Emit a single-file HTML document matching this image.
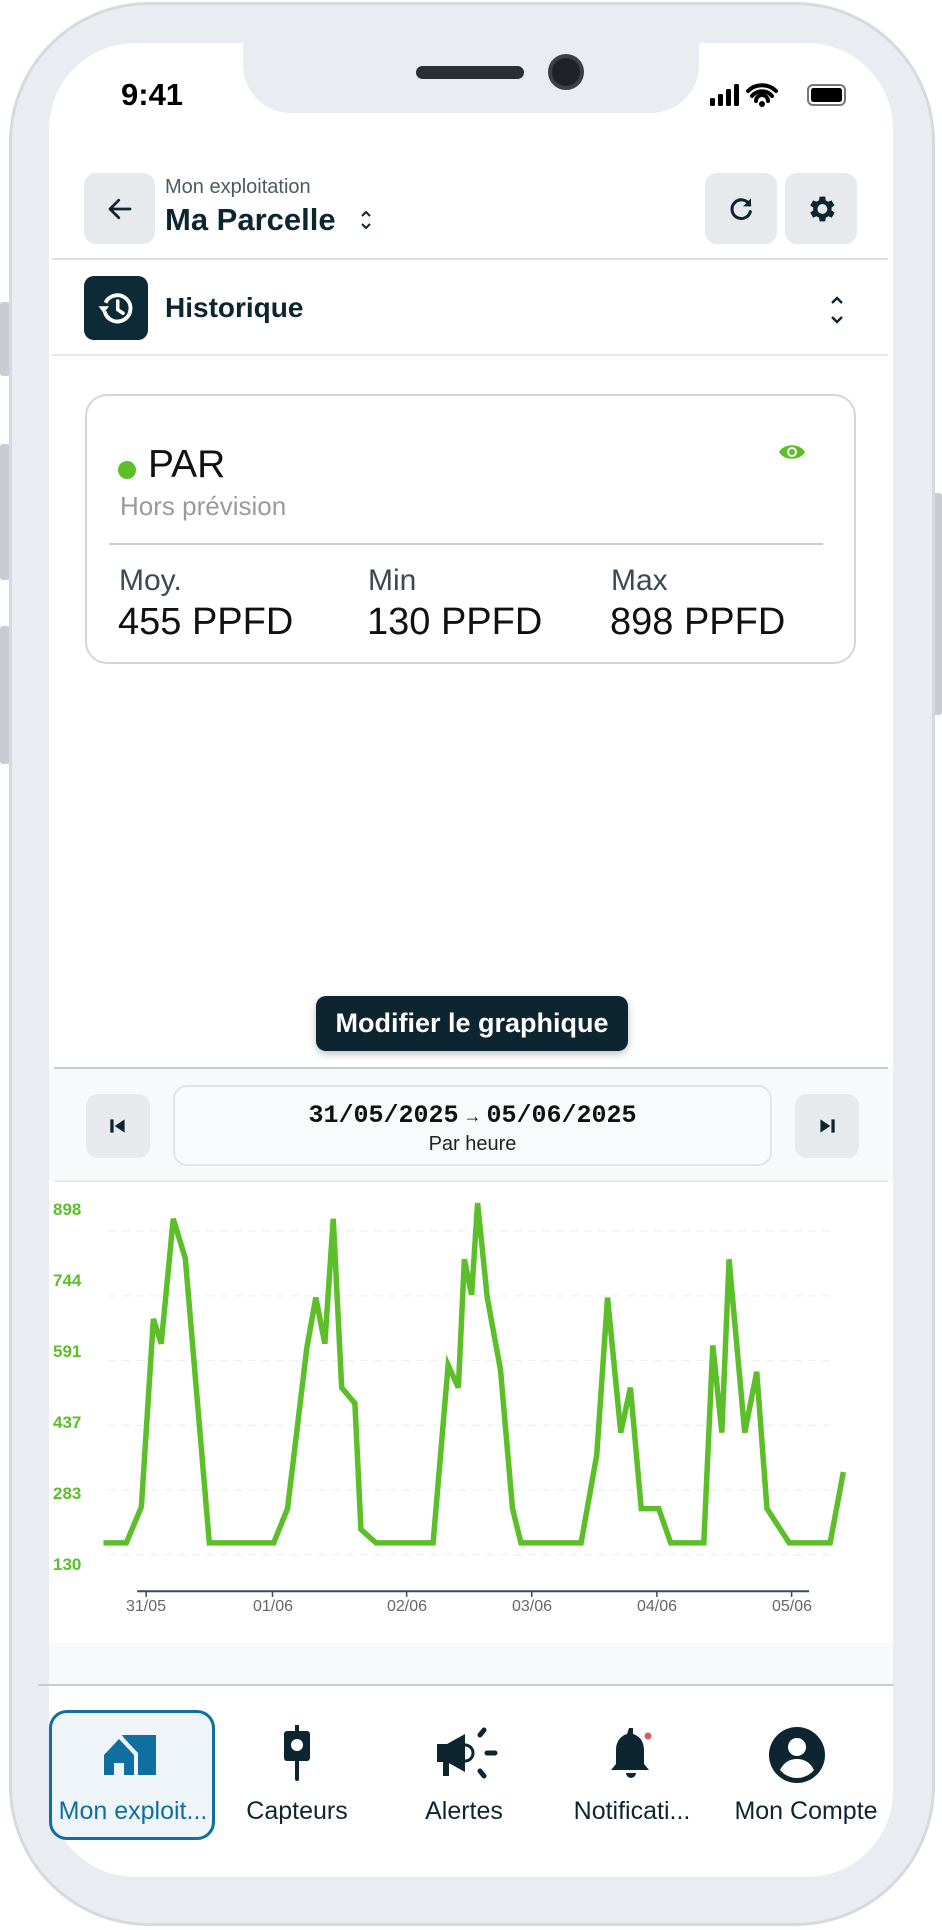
<!DOCTYPE html>
<html><head><meta charset="utf-8"><style>
*{margin:0;padding:0;box-sizing:border-box}
body{width:942px;height:1930px;background:#fff;position:relative;overflow:hidden;font-family:"Liberation Sans",sans-serif;color:#0d2531}
.a{position:absolute}
.btn{position:absolute;background:#e6eaec;border-radius:12px;display:flex;align-items:center;justify-content:center}
.lab{position:absolute;font-size:17px;font-weight:bold;color:#5cbf2a;left:53px}
.tick{position:absolute;font-size:16px;color:#666;top:1598px;transform:translateX(-50%)}
.nl{position:absolute;top:1797px;font-size:25px;color:#0d2531;transform:translateX(-50%);white-space:nowrap}
</style></head><body>
<div class="a" style="left:0;top:302px;width:10px;height:74px;background:#c9ccd1;border-radius:3px"></div>
<div class="a" style="left:0;top:444px;width:10px;height:136px;background:#c9ccd1;border-radius:3px"></div>
<div class="a" style="left:0;top:626px;width:10px;height:138px;background:#c9ccd1;border-radius:3px"></div>
<div class="a" style="left:932px;top:493px;width:10px;height:222px;background:#c9ccd1;border-radius:3px"></div>
<div class="a" style="left:9px;top:2px;width:926px;height:1924px;background:#e9ecf0;border:3px solid #d6d9de;border-radius:140px"></div>
<div class="a" style="left:49px;top:43px;width:844px;height:1834px;background:#fff;border-radius:86px;overflow:hidden">
  <div class="a" style="left:0;top:1025px;width:844px;height:618px;background:#f7f9fa"></div>
  <div class="a" style="left:0;top:1138px;width:844px;height:462px;background:#fff"></div>
</div>
<div class="a" style="left:243px;top:30px;width:456px;height:83px;background:#e9ecf0;border-radius:0 0 48px 48px"></div>
<div class="a" style="left:416px;top:66px;width:108px;height:13px;background:#2a2f33;border-radius:7px"></div>
<div class="a" style="left:548px;top:54px;width:36px;height:36px;background:#1e2226;border-radius:50%;border:4px solid #3a4046"></div>
<div class="a" style="left:121px;top:77px;font-size:31px;font-weight:bold;color:#000">9:41</div>
<svg class="a" style="left:708px;top:82px" width="140" height="26" viewBox="0 0 140 26">
<rect x="2" y="16" width="5" height="8" rx="1.5" fill="#000"/><rect x="10" y="12" width="5" height="12" rx="1.5" fill="#000"/><rect x="18" y="7" width="5" height="17" rx="1.5" fill="#000"/><rect x="26" y="2" width="5" height="22" rx="1.5" fill="#000"/>
<path d="M40 9a20 20 0 0 1 28 0M44 14a13 13 0 0 1 20 0M48 19a6 6 0 0 1 12 0" stroke="#000" stroke-width="4" fill="none" stroke-linecap="round"/><circle cx="54" cy="22" r="3" fill="#000"/>
<rect x="100" y="3" width="37" height="20" rx="5" fill="none" stroke="#777" stroke-width="2"/><rect x="103" y="6" width="31" height="14" rx="2.5" fill="#000"/>
</svg>
<div class="btn" style="left:84px;top:173px;width:71px;height:71px"><svg width="30" height="30" viewBox="0 0 24 24"><path d="M20 12H5M11 5l-7 7 7 7" stroke="#0d2531" stroke-width="2.2" fill="none" stroke-linecap="round" stroke-linejoin="round"/></svg></div>
<div class="a" style="left:165px;top:176px;font-size:20px;color:#4a5a62">Mon exploitation</div>
<div class="a" style="left:165px;top:202px;font-size:31px;font-weight:bold">Ma Parcelle</div>
<svg class="a" style="left:359px;top:208px" width="14" height="24" viewBox="0 0 14 24"><path d="M3 8l4-4 4 4M3 16l4 4 4-4" stroke="#0d2531" stroke-width="2" fill="none"/></svg>
<div class="btn" style="left:705px;top:173px;width:72px;height:71px"><svg width="32" height="32" viewBox="0 0 24 24"><path d="M18.5 9A7 7 0 1 0 19 14" stroke="#0d2531" stroke-width="2.3" fill="none" stroke-linecap="round"/><path d="M19.5 4v6h-6z" fill="#0d2531"/></svg></div>
<div class="btn" style="left:785px;top:173px;width:72px;height:71px"><svg width="34" height="34" viewBox="0 0 24 24"><path fill="#0d2531" d="M19.4 13a7.5 7.5 0 0 0 0-2l2.1-1.6-2-3.5-2.5 1a7.3 7.3 0 0 0-1.7-1L15 3.3h-4l-.4 2.6a7.3 7.3 0 0 0-1.7 1l-2.5-1-2 3.5L6.5 11a7.5 7.5 0 0 0 0 2l-2.1 1.6 2 3.5 2.5-1c.5.4 1.1.7 1.7 1l.4 2.6h4l.4-2.6c.6-.3 1.2-.6 1.7-1l2.5 1 2-3.5zM13 15.5a3.5 3.5 0 1 1 0-7 3.5 3.5 0 0 1 0 7z"/></svg></div>
<div class="a" style="left:52px;top:258px;width:836px;height:2px;background:#dde1e4"></div>
<div class="a" style="left:84px;top:276px;width:64px;height:64px;background:#0d2b36;border-radius:10px;display:flex;align-items:center;justify-content:center"><svg width="42" height="42" viewBox="0 0 24 24"><path d="M6 9a7.5 7.5 0 1 1-.5 5" stroke="#fff" stroke-width="2.2" fill="none"/><path d="M2 11h6l-3 4z" fill="#fff"/><path d="M13 8v5l3 2" stroke="#fff" stroke-width="2" fill="none" stroke-linecap="round"/></svg></div>
<div class="a" style="left:165px;top:292px;font-size:28px;font-weight:bold">Historique</div>
<svg class="a" style="left:826px;top:293px" width="22" height="34" viewBox="0 0 22 34"><path d="M6 10l5-5 5 5M6 24l5 5 5-5" stroke="#0d2531" stroke-width="2.4" fill="none"/></svg>
<div class="a" style="left:52px;top:354px;width:836px;height:2px;background:#e6e9eb"></div>
<div class="a" style="left:85px;top:394px;width:771px;height:270px;border:2px solid #d4d6d8;border-radius:22px"></div>
<div class="a" style="left:118px;top:461px;width:18px;height:18px;border-radius:50%;background:#5cbf2a"></div>
<div class="a" style="left:148px;top:443px;font-size:39px;color:#111">PAR</div>
<div class="a" style="left:120px;top:491px;font-size:26px;color:#9a9a9a">Hors prévision</div>
<svg class="a" style="left:777px;top:441px" width="30" height="22" viewBox="0 0 30 22"><path d="M2 11C7 2 23 2 28 11C23 20 7 20 2 11z" fill="#5cbf2a"/><circle cx="15" cy="11" r="5" fill="#fff"/><circle cx="15" cy="11" r="3" fill="#5cbf2a"/></svg>
<div class="a" style="left:109px;top:543px;width:714px;height:2px;background:#ccc"></div>
<div class="a" style="left:119px;top:564px;font-size:30px;color:#3a4a52">Moy.</div>
<div class="a" style="left:368px;top:564px;font-size:30px;color:#3a4a52">Min</div>
<div class="a" style="left:611px;top:564px;font-size:30px;color:#3a4a52">Max</div>
<div class="a" style="left:118px;top:601px;font-size:38px;color:#111">455 PPFD</div>
<div class="a" style="left:367px;top:601px;font-size:38px;color:#111">130 PPFD</div>
<div class="a" style="left:610px;top:601px;font-size:38px;color:#111">898 PPFD</div>
<div class="a" style="left:316px;top:996px;width:312px;height:55px;background:#0d2531;border-radius:10px;color:#fff;font-size:27px;font-weight:bold;display:flex;align-items:center;justify-content:center;box-shadow:0 3px 8px rgba(0,0,0,.25)">Modifier le graphique</div>
<div class="a" style="left:54px;top:1067px;width:834px;height:2px;background:#c8cdd0"></div>
<div class="btn" style="left:86px;top:1094px;width:64px;height:64px"><svg width="22" height="22" viewBox="0 0 20 20"><rect x="3" y="4" width="3" height="12" fill="#0d2531"/><path d="M16 4v12l-9-6z" fill="#0d2531"/></svg></div>
<div class="a" style="left:173px;top:1085px;width:599px;height:81px;border:2px solid #e2e5e7;border-radius:14px;background:#f9fafb"></div>
<div class="a" style="left:173px;top:1101px;width:599px;text-align:center;font-family:'Liberation Mono',monospace;font-size:25px;font-weight:bold;color:#111">31/05/2025<span style="font-size:18px;font-family:'Liberation Sans',sans-serif"> → </span>05/06/2025</div>
<div class="a" style="left:173px;top:1133px;width:599px;text-align:center;font-size:20px;color:#222">Par heure</div>
<div class="btn" style="left:795px;top:1094px;width:64px;height:64px"><svg width="22" height="22" viewBox="0 0 20 20"><rect x="14" y="4" width="3" height="12" fill="#0d2531"/><path d="M4 4v12l9-6z" fill="#0d2531"/></svg></div>
<div class="a" style="left:54px;top:1180px;width:834px;height:2px;background:#e8ebed"></div>
<svg class="a" style="left:0;top:1050px" width="942" height="880" viewBox="0 0 1566 1564" preserveAspectRatio="none">
<g stroke="#eeeeee" stroke-width="1" stroke-dasharray="8 6">
<line x1="180" x2="1380" y1="322" y2="322" vector-effect="non-scaling-stroke"/><line x1="180" x2="1380" y1="437" y2="437" vector-effect="non-scaling-stroke"/><line x1="180" x2="1380" y1="552" y2="552" vector-effect="non-scaling-stroke"/><line x1="180" x2="1380" y1="667" y2="667" vector-effect="non-scaling-stroke"/><line x1="180" x2="1380" y1="782" y2="782" vector-effect="non-scaling-stroke"/><line x1="180" x2="1380" y1="897" y2="897" vector-effect="non-scaling-stroke"/>
</g>
<line x1="228" x2="1345" y1="962" y2="962" stroke="#3f4a52" stroke-width="2" vector-effect="non-scaling-stroke"/>
<g stroke="#3f4a52" stroke-width="1.5"><line x1="243" x2="243" y1="962" y2="972" vector-effect="non-scaling-stroke"/><line x1="453" x2="453" y1="962" y2="972" vector-effect="non-scaling-stroke"/><line x1="676" x2="676" y1="962" y2="972" vector-effect="non-scaling-stroke"/><line x1="884" x2="884" y1="962" y2="972" vector-effect="non-scaling-stroke"/><line x1="1092" x2="1092" y1="962" y2="972" vector-effect="non-scaling-stroke"/><line x1="1316" x2="1316" y1="962" y2="972" vector-effect="non-scaling-stroke"/></g>
<polyline fill="none" stroke="#5cbf2a" stroke-width="5.5" vector-effect="non-scaling-stroke" points="172,876 210,876 235,812 255,478 268,522 288,300 308,370 348,876 455,876 478,815 510,530 525,440 540,522 554,300 568,600 590,628 600,852 625,876 720,876 745,560 762,600 772,372 784,435 794,272 810,440 832,568 852,815 866,876 966,876 992,720 1010,440 1032,680 1048,600 1066,815 1095,815 1115,876 1170,876 1185,525 1200,680 1212,372 1238,680 1258,572 1275,815 1312,876 1380,876 1402,750"/>
</svg>
<div class="lab" style="top:1200px">898</div>
<div class="lab" style="top:1271px">744</div>
<div class="lab" style="top:1342px">591</div>
<div class="lab" style="top:1413px">437</div>
<div class="lab" style="top:1484px">283</div>
<div class="lab" style="top:1555px">130</div>
<div class="tick" style="left:146px">31/05</div>
<div class="tick" style="left:273px">01/06</div>
<div class="tick" style="left:407px">02/06</div>
<div class="tick" style="left:532px">03/06</div>
<div class="tick" style="left:657px">04/06</div>
<div class="tick" style="left:792px">05/06</div>
<div class="a" style="left:38px;top:1684px;width:856px;height:2px;background:#c8cdd0"></div>
<div class="a" style="left:49px;top:1710px;width:166px;height:130px;border:3.5px solid #0e6fa0;border-radius:18px;background:#eef4f8"></div>
<svg class="a" style="left:102px;top:1733px" width="60" height="44" viewBox="0 0 60 44"><path d="M2 22L17 6l15 16v20h-10V30h-10v12H2z" fill="#0e6fa0"/><path d="M20 2h34v40H36V20L22 5z" fill="#0e6fa0"/></svg>
<svg class="a" style="left:281px;top:1725px" width="32" height="58" viewBox="0 0 32 58"><rect x="3" y="6" width="26" height="30" rx="3" fill="#0d2531"/><circle cx="16" cy="20" r="6" fill="#fff"/><rect x="14" y="0" width="4" height="8" fill="#0d2531"/><rect x="14" y="34" width="4" height="22" rx="2" fill="#0d2531"/></svg>
<svg class="a" style="left:435px;top:1727px" width="64" height="54" viewBox="0 0 64 54"><path d="M2 17h10l18-10v38L12 35H2z" fill="#0d2531"/><rect x="8" y="33" width="6" height="16" fill="#0d2531"/><path d="M30 18a8 8 0 0 1 0 16" stroke="#0d2531" stroke-width="3" fill="none"/><path d="M45 8l4-5M52 26h8M45 44l4 5" stroke="#0d2531" stroke-width="5" stroke-linecap="round"/></svg>
<svg class="a" style="left:606px;top:1726px" width="52" height="56" viewBox="0 0 52 56"><path d="M23 2h4v6c7 2 11 8 11 16v14l5 6H5l5-6V24c0-8 4-14 11-16z" fill="#0d2531"/><path d="M20 47h10a5 5 0 0 1-10 0z" fill="#0d2531"/><circle cx="42" cy="10" r="3.5" fill="#e05a5a"/></svg>
<svg class="a" style="left:768px;top:1726px" width="58" height="58" viewBox="0 0 58 58"><circle cx="29" cy="29" r="28" fill="#0d2531"/><circle cx="29" cy="21" r="9" fill="#fff"/><path d="M12 44c4-8 10-11 17-11s13 3 17 11a22 22 0 0 1-34 0z" fill="#fff"/></svg>
<div class="nl" style="left:133px;color:#0e6fa0">Mon exploit...</div>
<div class="nl" style="left:297px">Capteurs</div>
<div class="nl" style="left:464px">Alertes</div>
<div class="nl" style="left:632px">Notificati...</div>
<div class="nl" style="left:806px">Mon Compte</div>
</body></html>
